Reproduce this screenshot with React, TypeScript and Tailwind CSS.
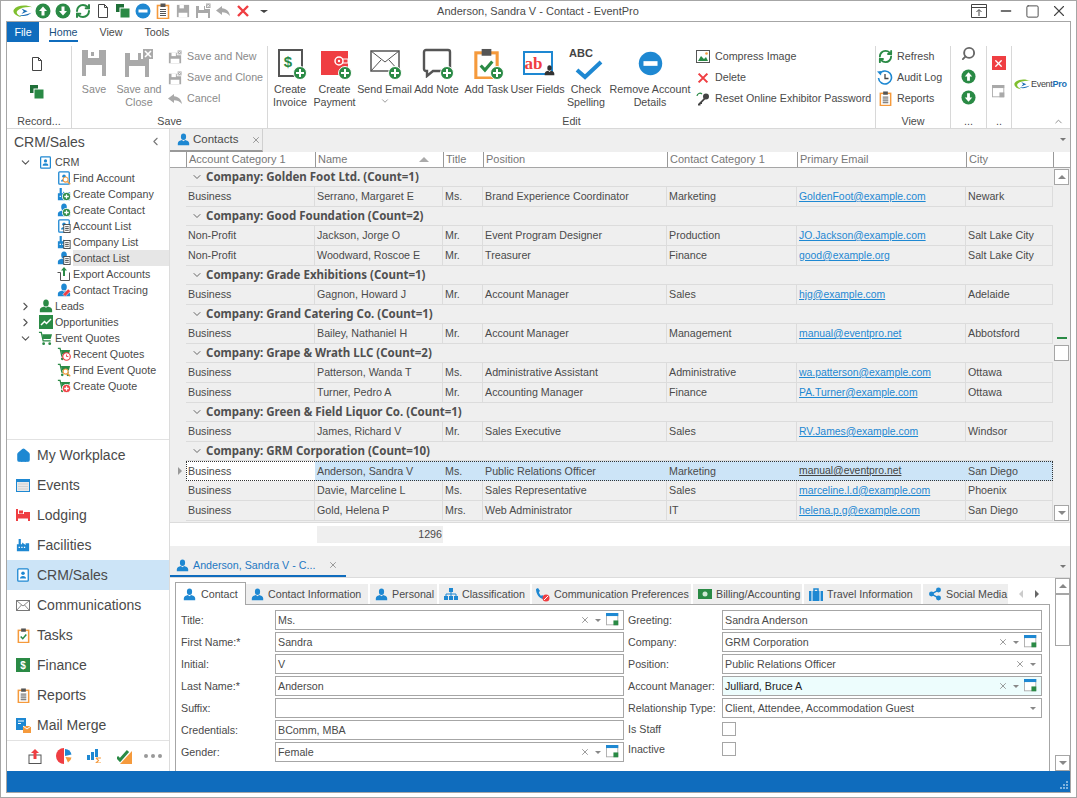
import { ChevronDown, ChevronRight, ChevronLeft, ChevronUp, RefreshCw, Search, X, Minus, Square, Home, Share2 } from 'lucide-react'
import type { ReactNode } from 'react'

const GREEN = '#2a8a45'
const BLUE = '#1e88d2'
const ORANGE = '#f59a3c'
const RED = '#ef3e42'
const GRAY = '#a9a9a9'
const DARK = '#555'

type IP = { s?: number; c?: string }

function Svg({ s = 16, children, v = 16 }: { s?: number; v?: number; children: ReactNode }) {
  return <svg width={s} height={s} viewBox={`0 0 ${v} ${v}`} className="shrink-0">{children}</svg>
}

function ArrowCircle({ s = 16, up }: IP & { up?: boolean }) {
  return (
    <Svg s={s}>
      <circle cx="8" cy="8" r="7.500" fill={GREEN} />
      <path d={up ? 'M8 3.500 12 8H9.500v4.500h-3V8H4z' : 'M8 12.500 12 8H9.500V3.500h-3V8H4z'} fill="#fff" />
    </Svg>
  )
}
function MinusCircle({ s = 16 }: IP) {
  return (
    <Svg s={s}>
      <circle cx="8" cy="8" r="7.500" fill={BLUE} />
      <rect x="3.500" y="6.500" width="9" height="3" fill="#fff" />
    </Svg>
  )
}
function Doc({ s = 16 }: IP) {
  return (
    <Svg s={s}>
      <path d="M3.500 1.500h6l3 3v10h-9z M9.500 1.500v3h3" fill="#fff" stroke="#444" strokeWidth="1" />
    </Svg>
  )
}
function Stack({ s = 16 }: IP) {
  return (
    <Svg s={s}>
      <rect x="1" y="1" width="8" height="8" fill="#1f6f38" />
      <rect x="5" y="5" width="10" height="10" fill={GREEN} stroke="#fff" strokeWidth="1" />
    </Svg>
  )
}
function Clipboard({ s = 16, check }: IP & { check?: boolean }) {
  return (
    <Svg s={s}>
      <rect x="2.500" y="2.500" width="11" height="13" fill="#fff" stroke={ORANGE} strokeWidth="1.600" />
      <rect x="5.500" y="0.500" width="5" height="3.500" fill={DARK} />
      {check ? (
        <path d="M5 9l2.200 2.400L11 7" stroke={GREEN} strokeWidth="1.600" fill="none" />
      ) : (
        <path d="M5 6.500h6M5 8.500h6M5 10.500h6M5 12.500h6" stroke={DARK} strokeWidth="1" />
      )}
    </Svg>
  )
}
function Floppy({ s = 16, x, c = GRAY }: IP & { x?: boolean }) {
  return (
    <Svg s={s}>
      <path d={x ? 'M1 3h9v3h5v9H1z' : 'M1 1h14v14H1z'} fill={c} />
      <rect x="4" y={x ? 3 : 1} width="5" height="4" fill="#fff" />
      <rect x="3" y="10" width="10" height="5" fill="#fff" />
      {x && <path d="M11 .500h4.500v4.500H11z" fill={c} />}
      {x && <path d="M12 1.500l2.500 2.500M14.500 1.500 12 4" stroke="#fff" strokeWidth="0.800" />}
    </Svg>
  )
}
function Undo({ s = 16, c = GRAY }: IP) {
  return (
    <Svg s={s}>
      <path d="M7 3 1 7.500 7 12V9.200c3 0 5.500.8 8 3.800-.5-4.500-3.500-7.500-8-7.800z" fill={c} />
    </Svg>
  )
}
function RedX({ s = 16 }: IP) {
  return (
    <Svg s={s}>
      <path d="M3 3l10 10M13 3 3 13" stroke={RED} strokeWidth="2.400" />
    </Svg>
  )
}
function Plus({ s = 14 }: IP) {
  return (
    <svg width={s} height={s} viewBox="0 0 14 14" className="absolute right-0 bottom-0">
      <circle cx="7" cy="7" r="6.500" fill={GREEN} stroke="#fff" strokeWidth="1" />
      <path d="M7 3v8M3 7h8" stroke="#fff" strokeWidth="2" />
    </svg>
  )
}
function Person({ s = 14, c = BLUE }: IP) {
  return (
    <Svg s={s}>
      <ellipse cx="8" cy="4.500" rx="3.200" ry="4" fill={c} />
      <path d="M1 15v-2.500C1 10 4 9 6 8.500l2 1.500 2-1.500c2 .5 5 1.500 5 4V15z" fill={c} />
    </Svg>
  )
}
function AddressBook({ s = 14, c = BLUE }: IP) {
  return (
    <Svg s={s}>
      <rect x="2" y="1" width="12" height="14" rx="1" fill="#fff" stroke={c} strokeWidth="1.500" />
      <circle cx="8" cy="6" r="2" fill={c} />
      <path d="M4.500 12c0-2 1.500-3 3.500-3s3.500 1 3.500 3z" fill={c} />
    </Svg>
  )
}
function Factory({ s = 14, c = BLUE }: IP) {
  return (
    <Svg s={s}>
      <path d="M1 15V7h2V1h2.500v6H7V5l4 3V6h4v9z" fill={c} />
      <path d="M3 10h1.500v1.500H3zM6 10h1.500v1.500H6zM9 10h1.500v1.500H9z" fill="#fff" />
    </Svg>
  )
}
function Cart({ s = 16, c = GREEN }: IP) {
  return (
    <Svg s={s}>
      <path d="M1 1.500h2.500l2 9h8" fill="none" stroke={c} strokeWidth="1.400" />
      <path d="M4.500 3.500H15l-1.500 5H5.500z" fill={c} />
      <circle cx="6" cy="13.500" r="1.500" fill={c} />
      <circle cx="12.500" cy="13.500" r="1.500" fill={c} />
    </Svg>
  )
}
function Badge({ kind }: { kind: 'plus' | 'list' | 'search' | 'clock' | 'redplus' | 'band' }) {
  return (
    <svg width="9" height="9" viewBox="0 0 10 10" className="absolute right-0 bottom-0">
      {kind === 'plus' && <><circle cx="5" cy="5" r="4.500" fill={GREEN} stroke="#fff" /><path d="M5 2.500v5M2.500 5h5" stroke="#fff" strokeWidth="1.400" /></>}
      {kind === 'redplus' && <><circle cx="5" cy="5" r="4.500" fill={RED} stroke="#fff" /><path d="M5 2.500v5M2.500 5h5" stroke="#fff" strokeWidth="1.400" /></>}
      {kind === 'list' && <><rect x="2" y="0.500" width="7" height="9" fill="#fff" stroke="#444" /><path d="M3.500 3h4M3.500 5h4M3.500 7h4" stroke="#444" /></>}
      {kind === 'search' && <><circle cx="4" cy="4" r="2.800" fill="#fff" stroke={ORANGE} strokeWidth="1.200" /><path d="M6 6l3.200 3.200" stroke={ORANGE} strokeWidth="1.500" /></>}
      {kind === 'clock' && <><circle cx="5" cy="5" r="4.200" fill="#fff" stroke={RED} strokeWidth="1.300" /><path d="M5 2.800V5h2" fill="none" stroke={RED} /></>}
      {kind === 'band' && <path d="M1 7 7 1l2.500 2.500-6 6z" fill={RED} stroke="#fff" strokeWidth="0.600" />}
    </svg>
  )
}
function Win({ dim }: { dim?: boolean }) {
  return (
    <Svg s={14}>
      <rect x="0.500" y="0.500" width="13" height="13" fill="#fff" stroke={GRAY} />
      <rect x="0" y="0" width="14" height="3.500" fill={dim ? GRAY : BLUE} />
      <rect x="8.500" y="8.500" width="5.500" height="5.500" fill={dim ? GRAY : GREEN} />
    </Svg>
  )
}
function Logo({ w = 20 }: { w?: number }) {
  return (
    <svg width={w} height={w * 0.62} viewBox="0 0 26 16" className="shrink-0">
      <path d="M25 3C17-1 5 0 1 6c-2 4 3 9 10 9.500C6 13 3 10 6 7c4-3.500 12-5 19-4z" fill="#7fbf2e" />
      <path d="M11 4.500 19 8l-8 3.500 3-3.500z" fill="#1b6fb5" />
      <path d="M8 13c5 2.500 12 1 16-3-4 1.500-10 3.500-16 3z" fill="#1b6fb5" />
    </svg>
  )
}

function BigIcon({ name }: { name: string }) {
  const wrap = 'relative h-[34px] w-[34px] flex items-center justify-center'
  if (name === 'save')
    return (
      <div className={wrap}>
        <svg width="24" height="26" viewBox="0 0 24 26" className="shrink-0">
          <path d="M0 0h24v26H0z" fill={GRAY} />
          <rect x="6" y="0" width="11" height="8" fill="#fff" />
          <rect x="9" y="2" width="3" height="4" fill={GRAY} />
          <rect x="4" y="15" width="16" height="11" fill="#fff" />
        </svg>
      </div>
    )
  if (name === 'saveclose')
    return (
      <div className={wrap}>
        <svg width="28" height="28" viewBox="0 0 28 28" className="shrink-0">
          <path d="M0 4h16v6h8v18H0z" fill={GRAY} />
          <rect x="5" y="4" width="8" height="7" fill="#fff" />
          <rect x="4" y="17" width="16" height="11" fill="#fff" />
          <rect x="18" y="0" width="10" height="10" fill={GRAY} />
          <path d="M20 2l6 6M26 2l-6 6" stroke="#fff" strokeWidth="1.600" />
        </svg>
      </div>
    )
  if (name === 'invoice')
    return (
      <div className={wrap}>
        <div className="flex h-[28px] w-[25px] items-center justify-center border-2 border-[#555] bg-white pb-1 pr-1 text-[15px] font-bold leading-none text-[#2a8a45]">$</div>
        <Plus />
      </div>
    )
  if (name === 'payment')
    return (
      <div className={wrap}>
        <svg width="30" height="26" viewBox="0 0 30 26" className="shrink-0">
          <rect x="1" y="1" width="27" height="24" fill={RED} />
          <circle cx="19" cy="11" r="4" fill="none" stroke="#fff" strokeWidth="1.500" />
          <circle cx="19" cy="11" r="1.200" fill="#fff" />
          <path d="M22 9h6v4h-6" fill="none" stroke="#fff" />
        </svg>
        <Plus />
      </div>
    )
  if (name === 'email')
    return (
      <div className={wrap}>
        <svg width="30" height="22" viewBox="0 0 30 22" className="-mt-1 shrink-0">
          <rect x="1" y="1" width="28" height="20" fill="#fff" stroke="#555" strokeWidth="1.500" />
          <path d="M1 1l14 11L29 1M1 21l10-11M29 21 19 10" fill="none" stroke="#555" />
        </svg>
        <Plus />
      </div>
    )
  if (name === 'note')
    return (
      <div className={wrap}>
        <svg width="30" height="30" viewBox="0 0 30 30" className="shrink-0">
          <path d="M4 2h22a2 2 0 0 1 2 2v17a2 2 0 0 1-2 2H11l-6 5v-5H4a2 2 0 0 1-2-2V4a2 2 0 0 1 2-2z" fill="#fff" stroke="#555" strokeWidth="2.400" />
        </svg>
        <Plus />
      </div>
    )
  if (name === 'task')
    return (
      <div className={wrap}>
        <Clipboard s={31} check />
        <Plus />
      </div>
    )
  if (name === 'fields')
    return (
      <div className={wrap}>
        <div className="flex h-[24px] w-[30px] items-center justify-center border-2 border-[#1e88d2] bg-white pr-2 font-['Liberation_Serif',serif] text-[17px] font-bold leading-none text-[#ef3e42]">ab</div>
        <div className="absolute right-0 bottom-1"><Person s={11} c="#333" /></div>
      </div>
    )
  if (name === 'spell')
    return (
      <div className={wrap}>
        <span className="absolute left-0 top-[2px] text-[11px] font-bold leading-none text-[#444]">ABC</span>
        <svg width="28" height="20" viewBox="0 0 28 20" className="absolute left-1.5 bottom-0">
          <path d="M2 10l8 7L26 2" fill="none" stroke={BLUE} strokeWidth="4" />
        </svg>
      </div>
    )
  return <div className={wrap}><MinusCircle s={25} /></div>
}

function BigBtn({ icon, label, w, gray, caret }: { icon: string; label: string[]; w: number; gray?: boolean; caret?: boolean }) {
  return (
    <div style={{ width: w }} className={`flex shrink-0 flex-col items-center ${gray ? 'text-[#8a8a8a]' : ''}`}>
      <BigIcon name={icon} />
      <div className="mt-[3px] text-center leading-[13px]">
        {label.map(l => <div key={l} className="whitespace-nowrap">{l}</div>)}
      </div>
      {caret && <ChevronDown size={10} className="text-[#888]" />}
    </div>
  )
}

function SmallBtn({ icon, label, gray }: { icon: ReactNode; label: string; gray?: boolean }) {
  return (
    <div className={`flex h-[21px] items-center gap-[4px] whitespace-nowrap ${gray ? 'text-[#8a8a8a]' : ''}`}>
      <span className="flex w-[16px] justify-center">{icon}</span>
      {label}
    </div>
  )
}

function Group({ w, label, children }: { w: number; label: string; children: ReactNode }) {
  return (
    <div style={{ width: w }} className="flex shrink-0 flex-col border-r border-[#d8d8d8]">
      <div className="flex h-[68px] overflow-hidden">{children}</div>
      <div className="whitespace-nowrap text-center leading-[14px]">{label}</div>
    </div>
  )
}

function Ribbon() {
  return (
    <div className="flex h-[107px] shrink-0 flex-col border-b border-[#d8d8d8] bg-white">
      <div className="flex h-[20px] items-center">
        <div className="flex h-[20px] w-[32px] items-center justify-center bg-[#0f6cbd] text-white">File</div>
        <div className="ml-[10px] flex h-[20px] flex-col items-center justify-center border-b-2 border-[#0f6cbd] pt-[2px] text-[#1a4f80]">Home</div>
        <div className="ml-[22px]">View</div>
        <div className="ml-[22px]">Tools</div>
      </div>
      <div className="mt-[4px] flex flex-1">
        <Group w={65} label="Record...">
          <div className="flex w-full flex-col items-center gap-[12px] pt-[10px] pr-[5px]">
            <Doc />
            <Stack />
          </div>
        </Group>
        <Group w={196} label="Save">
          <BigBtn icon="save" label={['Save']} w={44} gray />
          <BigBtn icon="saveclose" label={['Save and', 'Close']} w={46} gray />
          <div className="ml-[5px] flex flex-col text-[#8a8a8a]">
            <SmallBtn gray icon={<Floppy s={14} x />} label="Save and New" />
            <SmallBtn gray icon={<Floppy s={14} x />} label="Save and Clone" />
            <SmallBtn gray icon={<Undo />} label="Cancel" />
          </div>
        </Group>
        <Group w={608} label="Edit">
          <BigBtn icon="invoice" label={['Create', 'Invoice']} w={44} />
          <BigBtn icon="payment" label={['Create', 'Payment']} w={45} />
          <BigBtn icon="email" label={['Send Email']} w={55} caret />
          <BigBtn icon="note" label={['Add Note']} w={49} />
          <BigBtn icon="task" label={['Add Task']} w={51} />
          <BigBtn icon="fields" label={['User Fields']} w={51} />
          <BigBtn icon="spell" label={['Check', 'Spelling']} w={46} />
          <BigBtn icon="remove" label={['Remove Account', 'Details']} w={82} />
          <div className="ml-[4px] flex flex-col">
            <SmallBtn icon={<svg width="14" height="13" viewBox="0 0 14 13"><rect x=".5" y=".5" width="13" height="12" fill="#fff" stroke="#555" /><path d="M2 11l3-5 3 3 2-2 2 4z" fill={GREEN} /><circle cx="10.500" cy="3.500" r="1.300" fill={ORANGE} /></svg>} label="Compress Image" />
            <SmallBtn icon={<RedX s={14} />} label="Delete" />
            <SmallBtn icon={<svg width="14" height="14" viewBox="0 0 14 14"><circle cx="10" cy="4.500" r="3" fill="#444" /><path d="M8 6 2 12v1.500h2.500V12H6v-1.500L9.500 7z" fill="#444" /><path d="M1 4a3 3 0 0 1 5-2" fill="none" stroke={GREEN} strokeWidth="1.200" /></svg>} label="Reset Online Exhibitor Password" />
          </div>
        </Group>
        <Group w={75} label="View">
          <div className="ml-[1px] flex flex-col">
            <SmallBtn icon={<RefreshCw size={15} color={GREEN} strokeWidth={3} />} label="Refresh" />
            <SmallBtn icon={<svg width="16" height="16" viewBox="0 0 16 16"><path d="M2.500 4A6.500 6.500 0 1 1 1.500 8" fill="none" stroke={BLUE} strokeWidth="1.600" /><path d="M0 1.500 4.500 1 4 5.500z" fill={BLUE} /><path d="M8 4v4.500h3.500" fill="none" stroke="#444" strokeWidth="1.300" /></svg>} label="Audit Log" />
            <SmallBtn icon={<Clipboard s={15} />} label="Reports" />
          </div>
        </Group>
        <Group w={36} label="...">
          <div className="flex w-full flex-col items-center">
            <Search size={15} color="#666" strokeWidth={3} className="-scale-x-100" />
            <div className="mt-[8px] flex flex-col gap-[6px]">
              <ArrowCircle s={15} up />
              <ArrowCircle s={15} />
            </div>
          </div>
        </Group>
        <Group w={25} label="..">
          <div className="flex w-full flex-col items-center gap-[15px] pt-[10px] pr-[1px]">
            <div className="flex h-[14px] w-[14px] items-center justify-center bg-[#ef3e42]"><X size={11} color="#fff" strokeWidth={3} /></div>
            <Win dim />
          </div>
        </Group>
        <div className="relative flex flex-1 items-start pt-[33px] pl-[2px]">
          <Logo w={17} />
          <span className="text-[9px] leading-[11px] tracking-[-0.3px] text-[#444]">Event<b className="text-[#1b6fb5]">Pro</b></span>
          <ChevronUp size={11} className="absolute right-[6px] bottom-[1px] text-[#888]" />
        </div>
      </div>
    </div>
  )
}

const tree: { label: string; level: number; chevron?: 'down' | 'right'; icon: ReactNode; selected?: boolean }[] = [
  { label: 'CRM', level: 0, chevron: 'down', icon: <AddressBook s={13} /> },
  { label: 'Find Account', level: 1, icon: <div className="relative"><AddressBook s={14} /><Badge kind="search" /></div> },
  { label: 'Create Company', level: 1, icon: <div className="relative"><Factory s={14} /><Badge kind="plus" /></div> },
  { label: 'Create Contact', level: 1, icon: <div className="relative"><Person s={14} /><Badge kind="plus" /></div> },
  { label: 'Account List', level: 1, icon: <div className="relative"><AddressBook s={14} /><Badge kind="list" /></div> },
  { label: 'Company List', level: 1, icon: <div className="relative"><Factory s={14} /><Badge kind="list" /></div> },
  { label: 'Contact List', level: 1, selected: true, icon: <div className="relative"><Person s={14} /><Badge kind="list" /></div> },
  { label: 'Export Accounts', level: 1, icon: <svg width="14" height="16" viewBox="0 0 14 16"><path d="M1.500 6.500h3v8h9v-8" fill="none" stroke="#555" transform="translate(-1 0)" /><path d="M7 1 10 4.500H8V10H6V4.500H4z" fill={GREEN} /></svg> },
  { label: 'Contact Tracing', level: 1, icon: <div className="relative"><Person s={14} /><Badge kind="band" /></div> },
  { label: 'Leads', level: 0, chevron: 'right', icon: <Person s={14} c={GREEN} /> },
  { label: 'Opportunities', level: 0, chevron: 'right', icon: <svg width="14" height="14" viewBox="0 0 14 14"><rect width="14" height="14" fill={GREEN} /><path d="M2 10l3.500-3.500 2 2L12 4" fill="none" stroke="#fff" strokeWidth="1.500" /></svg> },
  { label: 'Event Quotes', level: 0, chevron: 'down', icon: <Cart s={15} /> },
  { label: 'Recent Quotes', level: 1, icon: <div className="relative"><Cart s={14} /><Badge kind="clock" /></div> },
  { label: 'Find Event Quote', level: 1, icon: <div className="relative"><Cart s={14} /><Badge kind="search" /></div> },
  { label: 'Create Quote', level: 1, icon: <div className="relative"><Cart s={14} /><Badge kind="redplus" /></div> },
]

const navItems: { label: string; icon: ReactNode; active?: boolean }[] = [
  { label: 'My Workplace', icon: <Home size={15} color={BLUE} fill={BLUE} /> },
  { label: 'Events', icon: <svg width="14" height="13" viewBox="0 0 14 13"><rect width="14" height="13" fill={BLUE} /><rect x="1" y="3" width="12" height="9" fill="#e8e8e8" /><path d="M2.500 5h9M2.500 7.500h9M2.500 10h9" stroke="#bbb" strokeDasharray="1 1" /></svg> },
  { label: 'Lodging', icon: <svg width="14" height="12" viewBox="0 0 14 12"><path d="M0 0h2v5h12v7h-2V9.500H2V12H0z" fill={RED} /><rect x="3" y="1.500" width="4" height="3" fill={RED} /><rect x="8" y="3" width="6" height="2" fill={RED} /></svg> },
  { label: 'Facilities', icon: <Factory s={14} /> },
  { label: 'CRM/Sales', active: true, icon: <AddressBook s={14} /> },
  { label: 'Communications', icon: <svg width="14" height="11" viewBox="0 0 14 11"><rect x=".5" y=".5" width="13" height="10" fill="#fff" stroke="#777" /><path d="M.5.500 7 6l6.500-5.500M.5 10.500l5-5.500M13.500 10.500l-5-5.500" fill="none" stroke="#888" /></svg> },
  { label: 'Tasks', icon: <Clipboard s={15} check /> },
  { label: 'Finance', icon: <svg width="14" height="14" viewBox="0 0 14 14"><rect width="14" height="14" fill={GREEN} /><text x="7" y="11" textAnchor="middle" fontSize="10" fontWeight="700" fill="#fff">$</text></svg> },
  { label: 'Reports', icon: <Clipboard s={15} /> },
  { label: 'Mail Merge', icon: <svg width="15" height="15" viewBox="0 0 15 15"><rect width="10" height="12" fill={BLUE} /><path d="M2 3h6M2 5.500h3" stroke="#fff" /><rect x="7" y="8" width="8" height="7" fill={ORANGE} /><path d="M7 8l4 3 4-3" fill="none" stroke="#fff" /></svg> },
]

function Sidebar() {
  return (
    <div className="flex w-[163px] shrink-0 flex-col border-r border-[#dcdcdc] bg-white">
      <div className="flex-1 overflow-hidden">
        <div className="flex h-[25px] items-center justify-between pl-[7px] pr-[7px]">
          <span className="text-[14px]">CRM/Sales</span>
          <ChevronLeft size={13} color="#777" />
        </div>
        {tree.map(({ label, level, chevron, icon, selected }) => (
          <div key={label} className="flex h-[16px] items-center">
            <div className={level === 0 ? 'flex w-[31px] shrink-0 justify-end pr-[6px]' : 'w-[49px] shrink-0'}>
              {chevron === 'down' && <ChevronDown size={13} color="#555" />}
              {chevron === 'right' && <ChevronRight size={13} color="#555" />}
            </div>
            <span className="flex w-[15px] shrink-0 justify-center">{icon}</span>
            <span className={`ml-[2px] flex h-[16px] flex-1 items-center whitespace-nowrap ${selected ? 'bg-[#e6e6e6]' : ''}`}>{label}</span>
          </div>
        ))}
      </div>
      <div className="border-t border-[#e2e2e2]">
        {navItems.map(({ label, icon, active }) => (
          <div key={label} className={`flex h-[30px] items-center text-[14px] ${active ? 'bg-[#cce4f7]' : ''}`}>
            <span className="flex w-[30px] shrink-0 justify-center pl-[2px]">{icon}</span>
            {label}
          </div>
        ))}
      </div>
      <div className="flex h-[31px] items-center border-t border-[#e2e2e2] pl-[20px] pr-[2px]">
        <span className="flex w-[15px] justify-center">
          <svg width="14" height="15" viewBox="0 0 14 15"><rect x="1" y="6" width="12" height="8.500" fill="#fff" stroke="#555" /><path d="M7 0 11 4H8.500v6h-3V4H3z" fill={RED} /></svg>
        </span>
        <span className="ml-[14px] flex w-[16px] justify-center">
          <svg width="16" height="16" viewBox="0 0 16 16"><path d="M8 0a8 8 0 1 0 0 16z" fill={RED} /><path d="M9 1a7 7 0 0 1 6.500 5.500L9 8z" fill={BLUE} /><path d="M9.500 9l6 .5a7 7 0 0 1-3.500 5z" fill={ORANGE} /></svg>
        </span>
        <span className="ml-[15px] flex w-[15px] justify-center">
          <svg width="15" height="14" viewBox="0 0 15 14"><rect x="0" y="6" width="3" height="5" fill={BLUE} /><rect x="4" y="3" width="3" height="8" fill={BLUE} /><rect x="8" y="0" width="3" height="8" fill={BLUE} /><path d="M9 9h5M9 9l2.500 2.500L9 14h5" fill="none" stroke={ORANGE} strokeWidth="1.200" /></svg>
        </span>
        <span className="ml-[15px] flex w-[15px] justify-center">
          <svg width="15" height="15" viewBox="0 0 15 15"><path d="M15 2v13H3z" fill={ORANGE} /><path d="M0 8l3 3 8-9" fill="none" stroke={GREEN} strokeWidth="3" /></svg>
        </span>
        <span className="ml-[12px] flex gap-[3px]">
          <i className="h-[4px] w-[4px] rounded-full bg-[#999]" />
          <i className="h-[4px] w-[4px] rounded-full bg-[#999]" />
          <i className="h-[4px] w-[4px] rounded-full bg-[#999]" />
        </span>
      </div>
    </div>
  )
}

const cols = [
  { name: 'Account Category 1', w: 129 },
  { name: 'Name', w: 128 },
  { name: 'Title', w: 40 },
  { name: 'Position', w: 184 },
  { name: 'Contact Category 1', w: 130 },
  { name: 'Primary Email', w: 169 },
  { name: 'City', w: 87 },
]
const gridCols = 'grid grid-cols-[129px_128px_40px_184px_130px_169px_87px]'

type Row = string | string[]
const rows: Row[] = [
  'Company: Golden Foot Ltd. (Count=1)',
  ['Business', 'Serrano, Margaret E', 'Ms.', 'Brand Experience Coordinator', 'Marketing', 'GoldenFoot@example.com', 'Newark'],
  'Company: Good Foundation (Count=2)',
  ['Non-Profit', 'Jackson, Jorge O', 'Mr.', 'Event Program Designer', 'Production', 'JO.Jackson@example.com', 'Salt Lake City'],
  ['Non-Profit', 'Woodward, Roscoe E', 'Mr.', 'Treasurer', 'Finance', 'good@example.org', 'Salt Lake City'],
  'Company: Grade Exhibitions (Count=1)',
  ['Business', 'Gagnon, Howard J', 'Mr.', 'Account Manager', 'Sales', 'hjg@example.com', 'Adelaide'],
  'Company: Grand Catering Co. (Count=1)',
  ['Business', 'Bailey, Nathaniel H', 'Mr.', 'Account Manager', 'Management', 'manual@eventpro.net', 'Abbotsford'],
  'Company: Grape & Wrath LLC (Count=2)',
  ['Business', 'Patterson, Wanda T', 'Ms.', 'Administrative Assistant', 'Administrative', 'wa.patterson@example.com', 'Ottawa'],
  ['Business', 'Turner, Pedro A', 'Mr.', 'Accounting Manager', 'Finance', 'PA.Turner@example.com', 'Ottawa'],
  'Company: Green & Field Liquor Co. (Count=1)',
  ['Business', 'James, Richard V', 'Mr.', 'Sales Executive', 'Sales', 'RV.James@example.com', 'Windsor'],
  'Company: GRM Corporation (Count=10)',
  ['Business', 'Anderson, Sandra V', 'Ms.', 'Public Relations Officer', 'Marketing', 'manual@eventpro.net', 'San Diego'],
  ['Business', 'Davie, Marceline L', 'Ms.', 'Sales Representative', 'Sales', 'marceline.l.d@example.com', 'Phoenix'],
  ['Business', 'Gold, Helena P', 'Mrs.', 'Web Administrator', 'IT', 'helena.p.g@example.com', 'San Diego'],
]

function ScrollBtn({ up }: { up?: boolean }) {
  return (
    <div className="flex h-[16px] w-[15px] shrink-0 items-center justify-center border border-[#a6a6a6] bg-white">
      <span className={`h-0 w-0 border-x-[4px] border-x-transparent ${up ? 'border-b-[4px] border-b-[#888]' : 'border-t-[4px] border-t-[#888]'}`} />
    </div>
  )
}

function Grid() {
  return (
    <div className="flex h-[370px] shrink-0 flex-col">
      <div className="flex h-[16px] shrink-0 border-b border-[#a6a6a6] bg-white text-[11px] leading-[15px] text-[#777]">
        <div className="w-[16px] shrink-0" />
        {cols.map(c => (
          <div key={c.name} style={{ width: c.w }} className="relative shrink-0 whitespace-nowrap border-l border-[#999] pl-[2px]">
            {c.name}
            {c.name === 'Name' && <span className="absolute top-[5px] right-[14px] h-0 w-0 border-x-[5px] border-b-[5px] border-x-transparent border-b-[#aaa]" />}
          </div>
        ))}
        <div className="h-[15px] border-l border-[#999]" />
      </div>
      <div className="flex flex-1">
        <div className="w-[883px] shrink-0 overflow-hidden">
          {rows.map(r =>
            typeof r === 'string' ? (
              <div key={r} className="ml-[16px] flex h-[19px] items-center gap-[3px] border-b border-[#dcdcdc] pl-[5px] font-['Noto_Sans',sans-serif] text-[11.500px] font-bold text-[#505050]">
                <ChevronDown size={12} color="#666" />
                {r}
              </div>
            ) : (
              <div key={r[1]} className="flex h-[20px]">
                <div className="flex w-[16px] items-center justify-end pr-[4px]">
                  {r[1].startsWith('Anderson') && <span className="h-0 w-0 border-y-[4px] border-l-[4px] border-y-transparent border-l-[#999]" />}
                </div>
                <div className={`${gridCols} flex-1 ${r[1].startsWith('Anderson') ? 'bg-[#cce4f7] outline-1 -outline-offset-1 outline-dotted outline-[#333]' : 'border-b border-[#dcdcdc]'}`}>
                  {r.map((cell, i) => (
                    <div
                      key={i}
                      className={`flex items-center overflow-hidden whitespace-nowrap border-r pl-[2px] ${r[1].startsWith('Anderson') ? 'border-transparent' : 'border-[#dcdcdc]'} ${r[1].startsWith('Anderson') && i === 0 ? 'bg-white' : ''}`}
                    >
                      {i === 5 ? <span className={`mt-[1px] text-[10.400px] underline ${r[1].startsWith('Anderson') ? 'text-[#444]' : 'text-[#1e88d2]'}`}>{cell}</span> : cell}
                    </div>
                  ))}
                </div>
              </div>
            ),
          )}
        </div>
        <div className="flex flex-1 flex-col items-center pt-[1px] pb-[1px]">
          <ScrollBtn up />
          <div className="flex-1" />
          <div className="h-[2px] w-[10px] bg-[#2a8a45]" />
          <div className="h-[6px]" />
          <div className="h-[16px] w-[15px] border border-[#a6a6a6] bg-white" />
          <div className="h-[144px]" />
          <ScrollBtn />
        </div>
      </div>
    </div>
  )
}

const tabs: { label: string; w: number; icon: ReactNode }[] = [
  { label: 'Contact Information', w: 124, icon: <Person s={13} /> },
  { label: 'Personal', w: 69, icon: <Person s={13} /> },
  { label: 'Classification', w: 93, icon: <svg width="14" height="12" viewBox="0 0 14 12" className="shrink-0"><rect x="5" y="0" width="4" height="4" fill={BLUE} /><rect x="0" y="8" width="4" height="4" fill={BLUE} /><rect x="5" y="8" width="4" height="4" fill={BLUE} /><rect x="10" y="8" width="4" height="4" fill={BLUE} /><path d="M2 8V6h10v2M7 4v4" fill="none" stroke={BLUE} /></svg> },
  { label: 'Communication Preferences', w: 161, icon: <svg width="15" height="15" viewBox="0 0 15 15" className="-ml-[2px] shrink-0"><path d="M1 2c0 5 3 9 7 10l2-2-3-2-1 1C5 8 4 6 4 5l1-1-2-3z" fill={BLUE} /><circle cx="11" cy="11" r="3.500" fill={RED} /><path d="M9 13l4-4" stroke="#fff" /></svg> },
  { label: 'Billing/Accounting', w: 111, icon: <svg width="14" height="10" viewBox="0 0 14 10" className="shrink-0"><rect width="14" height="10" fill={GREEN} /><circle cx="7" cy="5" r="2.500" fill="#cfe8d5" /></svg> },
  { label: 'Travel Information', w: 119, icon: <svg width="14" height="13" viewBox="0 0 14 13" className="shrink-0"><rect y="3" width="14" height="10" fill={BLUE} /><path d="M5 3V1h4v2" fill="none" stroke={BLUE} strokeWidth="1.500" /><path d="M3 3v10M11 3v10" stroke="#fff" /></svg> },
  { label: 'Social Media', w: 87, icon: <Share2 size={14} color={BLUE} fill={BLUE} strokeWidth={2.500} className="shrink-0" /> },
]

function Field({ value, x, arrow, win, active }: { value?: string; x?: boolean; arrow?: boolean; win?: boolean; active?: boolean }) {
  return (
    <div className={`flex h-[20px] items-center border border-[#a6a6a6] pl-[2px] pr-[3px] ${active ? 'bg-[#edfdfd] text-[#222]' : 'bg-white'}`}>
      <span className="flex-1 whitespace-nowrap">{value}</span>
      {x && <X size={10} color="#888" strokeWidth={2} />}
      {arrow && <span className="ml-[5px] mr-[2px] h-0 w-0 border-x-[3.500px] border-t-[3.500px] border-x-transparent border-t-[#888]" />}
      {win && <span className="ml-[3px]"><Win /></span>}
    </div>
  )
}

const formLeft: { label: string; value?: string; adorn?: boolean }[] = [
  { label: 'Title:', value: 'Ms.', adorn: true },
  { label: 'First Name:*', value: 'Sandra' },
  { label: 'Initial:', value: 'V' },
  { label: 'Last Name:*', value: 'Anderson' },
  { label: 'Suffix:' },
  { label: 'Credentials:', value: 'BComm, MBA' },
  { label: 'Gender:', value: 'Female', adorn: true },
]

function DetailPanel() {
  return (
    <div className="flex h-[193px] min-h-0 shrink-0 bg-white">
      <div className="flex min-w-0 flex-1 flex-col pl-[5px]">
        <div className="flex h-[26px] shrink-0 items-end">
          <div className="z-10 -mb-px flex h-[23px] w-[71px] shrink-0 items-center gap-[5px] border border-b-0 border-[#a6a6a6] bg-white pl-[7px]">
            <Person s={13} />
            Contact
          </div>
          {tabs.map(t => (
            <div key={t.label} style={{ width: t.w }} className="flex h-[20px] shrink-0 items-center gap-[4px] whitespace-nowrap border-r-2 border-white bg-[#eee] pl-[5px]">
              {t.icon}
              {t.label}
            </div>
          ))}
          <div className="flex h-[20px] flex-1 items-center justify-center gap-[12px] pr-[2px]">
            <span className="h-0 w-0 border-y-[4px] border-r-[4px] border-y-transparent border-r-[#ccc]" />
            <span className="h-0 w-0 border-y-[4px] border-l-[4px] border-y-transparent border-l-[#666]" />
          </div>
        </div>
        <div className="grid flex-1 grid-cols-[449px_1fr] overflow-hidden border-x border-t border-[#a6a6a6] pt-[5px]">
          <div className="flex flex-col gap-[2px] pl-[5px]">
            {formLeft.map(f => (
              <div key={f.label} className="grid grid-cols-[94px_349px] items-center">
                <span>{f.label}</span>
                <Field value={f.value} x={f.adorn} arrow={f.adorn} win={f.adorn} />
              </div>
            ))}
          </div>
          <div className="flex flex-col pl-[3px]">
            <div className="flex flex-col gap-[2px]">
              <div className="grid grid-cols-[94px_320px] items-center"><span>Greeting:</span><Field value="Sandra Anderson" /></div>
              <div className="grid grid-cols-[94px_320px] items-center"><span>Company:</span><Field value="GRM Corporation" x arrow win /></div>
              <div className="grid grid-cols-[94px_320px] items-center"><span>Position:</span><Field value="Public Relations Officer" x arrow /></div>
              <div className="grid grid-cols-[94px_320px] items-center"><span className="whitespace-nowrap">Account Manager:</span><Field value="Julliard, Bruce A" x arrow win active /></div>
              <div className="grid grid-cols-[94px_320px] items-center"><span className="whitespace-nowrap">Relationship Type:</span><Field value="Client, Attendee, Accommodation Guest" arrow /></div>
            </div>
            <div className="mt-[1px] grid h-[20px] grid-cols-[94px_14px] items-center"><span>Is Staff</span><span className="h-[14px] w-[14px] border border-[#a6a6a6]" /></div>
            <div className="grid h-[20px] grid-cols-[94px_14px] items-center"><span>Inactive</span><span className="h-[14px] w-[14px] border border-[#a6a6a6]" /></div>
          </div>
        </div>
      </div>
      <div className="flex w-[20px] shrink-0 flex-col pl-[5px]">
        <ScrollBtn up />
        <div className="h-[52px] w-[15px] border border-[#a6a6a6] bg-white" />
        <div className="flex-1" />
        <ScrollBtn />
      </div>
    </div>
  )
}

export default function App() {
  return (
    <div className="flex h-[798px] w-[1077px] flex-col overflow-hidden border border-[#a6a6a6] bg-white font-['Liberation_Sans',sans-serif] text-[10.700px] leading-none text-[#4a4a4a]">
      {/* Title bar */}
      <div className="flex h-[20px] shrink-0 items-center pl-[12px] pr-[8px]">
        <Logo />
        <div className="flex items-center">
          {[<ArrowCircle key="u" up />, <ArrowCircle key="d" />, <RefreshCw key="r" size={16} color={GREEN} strokeWidth={3} />, <Doc key="n" />, <Stack key="s" />, <MinusCircle key="m" />, <Clipboard key="c" />, <Floppy key="f" s={14} />, <Floppy key="fx" x />, <Undo key="b" />, <RedX key="x" />].map((n, i) => (
            <span key={i} className="flex w-[20px] justify-center">{n}</span>
          ))}
          <span className="ml-[7px] h-0 w-0 border-x-[4px] border-t-[3px] border-x-transparent border-t-[#444]" />
        </div>
        <div className="flex-1 pr-[163px] text-center text-[11px]">Anderson, Sandra V - Contact - EventPro</div>
        <div className="flex items-center gap-[10px]">
          <svg width="16" height="14" viewBox="0 0 16 14"><path d="M.5.500h15v13H.5zM.5 3.500h15M8 12V6M5.500 8 8 5.500 10.500 8" fill="none" stroke="#444" /></svg>
          <Minus size={16} color="#444" className="ml-[1px]" />
          <Square size={15} color="#444" strokeWidth={1.500} className="ml-[1px]" />
          <X size={18} color="#444" strokeWidth={1.500} />
        </div>
      </div>
      {/* Window frame */}
      <div className="mx-[5px] flex h-[772px] w-[1065px] flex-col border border-[#a6a6a6]">
        <Ribbon />
        <div className="flex min-h-0 flex-1">
          <Sidebar />
          <div className="flex min-w-0 flex-1 flex-col bg-[#efefef]">
            <div className="flex h-[23px] shrink-0 items-start justify-between">
              <div className="flex h-[23px] w-[93px] items-center gap-[3px] border-b-2 border-r border-[#d0d0d0] border-b-[#999] pl-[7px]">
                <Person s={13} />
                <span className="text-[11.500px]">Contacts</span>
                <X size={10} color="#888" className="ml-[10px]" />
              </div>
              <span className="mr-[4px] mt-[9px] h-0 w-0 border-x-[3.500px] border-t-[3.500px] border-x-transparent border-t-[#777]" />
            </div>
            <Grid />
            <div className="flex h-[24px] shrink-0 items-center border-t border-[#dcdcdc] bg-white pl-[147px]">
              <div className="flex h-[17px] w-[126px] items-center justify-end bg-[#efefef] pr-[1px]">1296</div>
            </div>
            <div className="flex h-[32px] shrink-0 items-end justify-between border-b border-[#dcdcdc]">
              <div className="flex h-[22px] w-[176px] items-center gap-[4px] whitespace-nowrap border-b-2 border-[#0f6cbd] pl-[6px] text-[#1e78c2]">
                <Person s={13} />
                <span>Anderson, Sandra V - C...</span>
                <X size={10} color="#888" className="ml-auto mr-[8px]" />
              </div>
              <span className="mb-[9px] mr-[4px] h-0 w-0 border-x-[3.500px] border-t-[3.500px] border-x-transparent border-t-[#777]" />
            </div>
            <DetailPanel />
          </div>
        </div>
        <div className="relative h-[21px] shrink-0 bg-[#0f6cbd]">
          <div className="absolute right-[2px] bottom-[3px] grid grid-cols-3 gap-[1px]">
            {[0, 0, 1, 0, 1, 1, 1, 1, 1].map((v, i) => (
              <span key={i} className={`h-[2px] w-[2px] ${v ? 'bg-[#7fb2de]' : ''}`} />
            ))}
          </div>
        </div>
      </div>
    </div>
  )
}
